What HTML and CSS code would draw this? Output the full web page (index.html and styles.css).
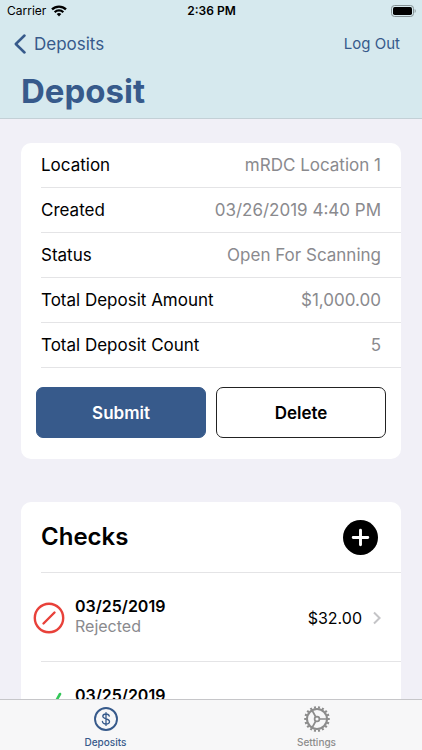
FILE: index.html
```html
<!DOCTYPE html>
<html lang="en">
<head>
<meta charset="utf-8">
<meta name="viewport" content="width=device-width, initial-scale=1">
<title>Deposit</title>
<link rel="stylesheet" href="styles.css">
</head>
<body>
<div class="app">
  <header class="header">
    <div class="status">
      <div class="carrier">
        <span>Carrier</span>
        <svg width="16" height="12" viewBox="0 0 16 12" fill="none" stroke="#000" stroke-width="2.3" aria-hidden="true">
          <path d="M1 4.4a10 10 0 0 1 14 0"/>
          <path d="M3.7 7.2a6.1 6.1 0 0 1 8.6 0"/>
          <path d="M8 11.4L5.7 9.1a3.3 3.3 0 0 1 4.6 0z" fill="#000" stroke="none"/>
        </svg>
      </div>
      <span class="time">2:36 PM</span>
      <svg class="battery" width="25" height="12" viewBox="0 0 25 12" aria-hidden="true">
        <rect x=".5" y=".5" width="22" height="11" rx="3" fill="none" stroke="#849194"/>
        <rect x="2" y="2" width="19" height="8" rx="1.7" fill="#000"/>
        <path d="M23.7 4v4c1.3-.5 1.3-3.500 0-4z" fill="#849194"/>
      </svg>
    </div>
    <nav class="nav">
      <a class="back" href="#">
        <svg width="12" height="20" viewBox="0 0 12 20" fill="none" stroke="currentColor" stroke-width="2.500" stroke-linecap="round" stroke-linejoin="round" aria-hidden="true"><path d="M10.500 1.500L1.800 10l8.700 8.500"/></svg>
        Deposits
      </a>
      <a class="logout" href="#">Log Out</a>
    </nav>
    <h1>Deposit</h1>
  </header>

  <main class="content">
    <section class="card">
      <dl class="details">
        <div class="row"><dt>Location</dt><dd>mRDC Location 1</dd></div>
        <div class="row"><dt>Created</dt><dd>03/26/2019 4:40 PM</dd></div>
        <div class="row"><dt>Status</dt><dd>Open For Scanning</dd></div>
        <div class="row"><dt>Total Deposit Amount</dt><dd>$1,000.00</dd></div>
        <div class="row"><dt>Total Deposit Count</dt><dd>5</dd></div>
      </dl>
      <div class="actions">
        <button class="button primary" type="button">Submit</button>
        <button class="button" type="button">Delete</button>
      </div>
    </section>

    <section class="card">
      <div class="checks-head">
        <h2>Checks</h2>
        <button class="add" type="button" aria-label="Add check">
          <svg width="35" height="35" viewBox="0 0 36 36" aria-hidden="true">
            <circle cx="18" cy="18" r="18" fill="#000"/>
            <path d="M18 10.500v15M10.500 18h15" stroke="#fff" stroke-width="3" stroke-linecap="round"/>
          </svg>
        </button>
      </div>
      <a class="check" href="#">
        <svg class="state" width="32" height="32" viewBox="0 0 32 32" fill="none" stroke="#e8413a" stroke-width="2.400" stroke-linecap="round" aria-hidden="true">
          <circle cx="16" cy="16" r="14.200"/>
          <path d="M10.500 21.500l11-11"/>
        </svg>
        <span class="info"><strong>03/25/2019</strong><span class="result">Rejected</span></span>
        <span class="amount">$32.00</span>
        <svg class="chevron" width="8" height="14" viewBox="0 0 8 14" fill="none" stroke="#c4c4c7" stroke-width="2" aria-hidden="true"><path d="M1 1.500L6.600 7 1 12.500"/></svg>
      </a>
      <a class="check" href="#">
        <svg class="state" width="32" height="32" viewBox="0 0 32 32" fill="none" stroke="#34c759" stroke-width="2.600" stroke-linecap="round" stroke-linejoin="round" aria-hidden="true">
          <path d="M4 18l9 10L27 3"/>
        </svg>
        <span class="info"><strong>03/25/2019</strong><span class="result">Accepted</span></span>
        <span class="amount">$32.00</span>
        <svg class="chevron" width="8" height="14" viewBox="0 0 8 14" fill="none" stroke="#c4c4c7" stroke-width="2" aria-hidden="true"><path d="M1 1.500L6.600 7 1 12.500"/></svg>
      </a>
    </section>
  </main>

  <nav class="tabs">
    <a class="tab active" href="#">
      <svg width="26" height="26" viewBox="0 0 26 26" fill="none" stroke="currentColor" aria-hidden="true">
        <circle cx="13" cy="13" r="11" stroke-width="1.900"/>
        <path d="M16.300 10.200c-.3-1.500-1.500-2.200-3.300-2.200-1.900 0-3.200.9-3.200 2.300 0 1.500 1.300 2 3.200 2.500s3.500 1 3.500 2.700c0 1.500-1.400 2.500-3.500 2.500s-3.400-.9-3.600-2.500M13 6.600v12.800" stroke-width="1.300" stroke-linecap="round"/>
      </svg>
      Deposits
    </a>
    <a class="tab" href="#">
      <svg width="26" height="26" viewBox="0 0 26 26" fill="none" stroke="currentColor" aria-hidden="true">
        <circle cx="13" cy="13" r="10" stroke-width="2"/>
        <circle cx="13" cy="13" r="11.700" stroke-width="2.200" pathLength="72" stroke-dasharray="2 2" stroke-dashoffset="1"/>
        <circle cx="13" cy="13" r="2.400" stroke-width="1.700"/>
        <path d="M15.300 13h7.500M11.800 11L8.200 4.500M11.800 15l-3.600 6.500" stroke-width="1.700"/>
      </svg>
      Settings
    </a>
  </nav>
</div>
</body>
</html>
```
FILE: styles.css
```css
* {
  box-sizing: border-box;
}

body {
  margin: 0;
  background: #f1f0f7;
  color: #000;
  font-family: Inter, "Liberation Sans", sans-serif;
  font-size: 17px;
  line-height: 20px;
}

a {
  color: inherit;
  text-decoration: none;
}

svg {
  display: block;
  flex: none;
}

h1,
h2,
dl,
dd {
  margin: 0;
}

.app {
  display: flex;
  flex-direction: column;
  height: 100vh;
}

.header {
  flex: none;
  background: #d6e9ee;
  border-bottom: 1px solid #c3d0d6;
  padding-bottom: 6px;
}

.status {
  display: grid;
  grid-template-columns: 1fr auto 1fr;
  align-items: center;
  height: 22px;
  padding: 0 6px 0 7px;
  font-size: 12px;
}

.carrier {
  display: flex;
  align-items: center;
  gap: 5px;
}

.time {
  font-weight: 600;
}

.battery {
  justify-self: end;
}

.nav {
  display: flex;
  align-items: center;
  justify-content: space-between;
  height: 44px;
  padding: 0 22px 0 14px;
  color: #375a8b;
}

.back {
  display: flex;
  align-items: center;
  gap: 8px;
}

.logout {
  font-size: 15px;
}

h1 {
  padding: 4px 21px 0;
  color: #375a8b;
  font-size: 33px;
  line-height: 42px;
}

.content {
  flex: 1;
  min-height: 0;
  overflow: hidden;
  padding: 24px 21px 0;
}

.card {
  margin-bottom: 43px;
  border-radius: 10px;
  background: #fff;
}

.details {
  padding-left: 20px;
}

.row {
  display: flex;
  align-items: center;
  justify-content: space-between;
  height: 45px;
  padding-right: 20px;
  border-bottom: 1px solid #e4e4e6;
}

dd {
  color: #8a8a8e;
}

.actions {
  display: grid;
  grid-template-columns: 1fr 1fr;
  gap: 10px;
  padding: 19px 15px 21px;
}

.button {
  height: 51px;
  border: 1px solid #222;
  border-radius: 7px;
  background: #fff;
  color: #000;
  font: inherit;
  font-weight: 600;
}

.primary {
  border-color: #375a8b;
  background: #375a8b;
  color: #fff;
}

.checks-head {
  display: flex;
  align-items: center;
  justify-content: space-between;
  height: 71px;
  margin-left: 20px;
  padding-right: 23px;
  border-bottom: 1px solid #e4e4e6;
}

h2 {
  font-size: 24px;
  font-weight: 600;
}

.add {
  padding: 0;
  border: 0;
  background: none;
}

.check {
  display: flex;
  align-items: center;
  height: 89px;
  padding: 0 20px 0 12px;
  background: linear-gradient(#e4e4e6, #e4e4e6) 20px 100% / 100% 1px no-repeat;
}

.info {
  display: grid;
  flex: 1;
  margin-left: 10px;
  padding-bottom: 4px;
  font-size: 16px;
}

.info strong {
  font-weight: 600;
}

.result {
  color: #8a8a8e;
}

.amount {
  font-size: 16px;
}

.chevron {
  margin-left: 11px;
}

.tabs {
  display: grid;
  flex: none;
  grid-template-columns: 1fr 1fr;
  border-top: 1px solid #c6c6c9;
  background: #f7f7f8;
}

.tab {
  display: flex;
  flex-direction: column;
  align-items: center;
  gap: 3px;
  padding: 6px 0 1px;
  color: #8c8c8c;
  font-size: 10px;
  font-weight: 500;
  line-height: 14px;
}

.active {
  color: #375a8b;
}
```
